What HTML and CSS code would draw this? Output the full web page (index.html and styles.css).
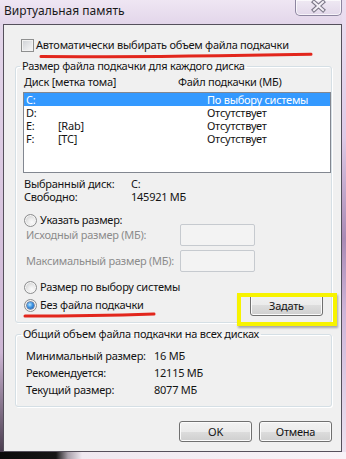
FILE: index.html
```html
<!DOCTYPE html>
<html lang="ru">
<head>
<meta charset="utf-8">
<title>Виртуальная память</title>
<link rel="stylesheet" href="styles.css">
</head>
<body>
<div class="screen">
  <div class="window">
    <div class="titlebar">
      <span class="title">Виртуальная память</span>
      <div class="close">
        <svg width="47" height="16" viewBox="0 0 47 16">
          <path d="M19 3 L28 11 M28 3 L19 11" stroke="#7c7888" stroke-width="4.2" stroke-linecap="square" fill="none"/>
          <path d="M19 3 L28 11 M28 3 L19 11" stroke="#f3eff6" stroke-width="2" stroke-linecap="square" fill="none"/>
        </svg>
      </div>
    </div>
    <div class="client">
      <div class="check-row"><span class="checkbox"></span><span>Автоматически выбирать объем файла подкачки</span></div>

      <fieldset class="group g1">
        <legend>Размер файла подкачки для каждого диска</legend>
        <div class="cols"><span class="c1">Диск [метка тома]</span><span>Файл подкачки (МБ)</span></div>
        <div class="listbox">
          <div class="lrow sel"><span class="d">C:</span><span class="l"></span><span>По выбору системы</span></div>
          <div class="lrow"><span class="d">D:</span><span class="l"></span><span>Отсутствует</span></div>
          <div class="lrow"><span class="d">E:</span><span class="l">[Rab]</span><span>Отсутствует</span></div>
          <div class="lrow"><span class="d">F:</span><span class="l">[TC]</span><span>Отсутствует</span></div>
        </div>
        <div class="info">
          <div class="irow"><span class="k">Выбранный диск:</span><span>C:</span></div>
          <div class="irow"><span class="k">Свободно:</span><span>145921 МБ</span></div>
        </div>
        <div class="radio-row first"><span class="radio"></span><span>Указать размер:</span></div>
        <div class="fields">
          <span class="flabel">Исходный размер (МБ):</span><span class="edit"></span>
          <span class="flabel">Максимальный размер (МБ):</span><span class="edit"></span>
        </div>
        <div class="bottom">
          <div class="radios">
            <div class="radio-row"><span class="radio"></span><span>Размер по выбору системы</span></div>
            <div class="radio-row"><span class="radio on"></span><span>Без файла подкачки</span></div>
          </div>
          <button class="btn set">Задать</button>
        </div>
      </fieldset>

      <fieldset class="group g2">
        <legend>Общий объем файла подкачки на всех дисках</legend>
        <div class="summary">
          <div class="srow"><span class="k">Минимальный размер:</span><span>16 МБ</span></div>
          <div class="srow"><span class="k">Рекомендуется:</span><span>12115 МБ</span></div>
          <div class="srow"><span class="k">Текущий размер:</span><span>8077 МБ</span></div>
        </div>
      </fieldset>

      <div class="actions">
        <button class="btn">OK</button>
        <button class="btn">Отмена</button>
      </div>

      <svg class="mark mark1" width="274" height="7" viewBox="0 0 274 7">
        <path d="M2 4.6 C 80 5, 200 3.6, 272 2.2" stroke="#e2261c" stroke-width="3" stroke-linecap="round" fill="none"/>
      </svg>
      <svg class="mark mark2" width="134" height="7" viewBox="0 0 134 7">
        <path d="M2 5 C 50 5, 100 4, 131 3" stroke="#e2261c" stroke-width="3" stroke-linecap="round" fill="none"/>
      </svg>
      <div class="highlight"></div>
    </div>
  </div>
  <div class="shadow"></div>
</div>
</body>
</html>
```

FILE: styles.css
```css
* { box-sizing: border-box; }
html, body { margin: 0; padding: 0; }
body {
  width: 346px;
  height: 459px;
  overflow: hidden;
  font-family: "Noto Sans", "Open Sans", sans-serif;
  font-size: 11px;
  letter-spacing: -0.25px;
  color: #141414;
  white-space: nowrap;
}
.screen {
  width: 346px;
  height: 459px;
  display: flex;
  flex-direction: column;
  background: linear-gradient(to bottom, #ecdff1 0%, #dfc9e6 30%, #a98ab5 52%, #cfb4d8 68%, #efe4f1 100%);
}
.window {
  width: 342px;
  height: 452px;
  display: flex;
  flex-direction: column;
  background: linear-gradient(to bottom, #efe6f3 0, #e3d6ea 24px, #dac8e0 40%, #cdb6d4 78%, #4a3d4f 100%);
}
.titlebar {
  height: 24px;
  display: flex;
  align-items: flex-start;
}
.title {
  padding: 3px 0 0 4px;
  font-size: 12px;
  line-height: 16px;
  letter-spacing: 0;
  color: #1a1a1a;
}
.close {
  margin-left: auto;
  width: 47px;
  height: 16px;
  border: 1px solid #8d86a0;
  border-top: none;
  border-radius: 0 0 5px 5px;
  background: linear-gradient(to bottom, #efe9f3, #e2d8ea);
  box-shadow: inset 0 0 0 1px rgba(255,255,255,0.7);
}
.close svg { display: block; margin: -1px 0 0 -1px; }

.client {
  position: relative;
  flex: 1;
  margin-left: 3px;
  width: 339px;
  border: 1px solid #55505c;
  background: #f0f0f0;
  display: flex;
  flex-direction: column;
}
.shadow {
  height: 7px;
  background: linear-gradient(to right, #0b0b0b 0, #161616 56px, #a9a1ab 68px, #efe8f0 82px, #f8f3f8 100%);
}

.check-row {
  display: flex;
  align-items: center;
  gap: 2px;
  height: 16px;
  line-height: 16px;
  margin: 12px 0 0 17px;
}
.checkbox {
  width: 13px;
  height: 13px;
  border: 1px solid #8e8f8f;
  background: linear-gradient(135deg, #cdd0d4 0%, #e6e7e9 55%, #f8f8f8 100%);
  box-shadow: inset 0 0 0 1px #f2f2f2;
}

.group {
  margin: 5px 9px 0 11px;
  padding: 0 0 9px 0;
  border: 1px solid #d5dfe5;
  border-radius: 3px;
  box-shadow: inset 1px 1px 0 #fff, 1px 1px 0 #fff;
  min-width: 0;
}
.group legend {
  margin-left: 4px;
  padding: 0 2px;
  line-height: 16px;
}
.g2 { margin-top: 3px; padding-bottom: 8px; }
.g2 legend { margin-left: 5px; }

.cols {
  display: flex;
  line-height: 16px;
  margin-left: 8px;
}
.cols .c1 { width: 154px; }

.listbox {
  margin: 2px 0 0 7px;
  width: 308px;
  height: 81px;
  border: 1px solid #828790;
  background: #fff;
}
.lrow {
  display: flex;
  height: 13px;
  line-height: 13px;
  padding-left: 2px;
}
.lrow .d { width: 32px; }
.lrow .l { width: 149px; }
.lrow.sel { background: #3399ff; color: #fff; }

.info { margin: 4px 0 0 8px; }
.irow { display: flex; line-height: 13px; }
.irow .k { width: 107px; }

.radio-row {
  display: flex;
  align-items: center;
  gap: 3px;
  height: 16px;
  line-height: 16px;
  margin-left: 8px;
}
.radio-row.first { margin-top: 9px; }
.radio {
  flex: none;
  width: 13px;
  height: 13px;
  border-radius: 50%;
  border: 1px solid #8c8d8e;
  background: radial-gradient(circle at 62% 66%, #fbfbfb 0, #ececec 35%, #cfcfcf 80%);
  box-shadow: inset 0 0 0 1px #f6f6f6;
}
.radio.on::after {
  content: "";
  display: block;
  width: 7px;
  height: 7px;
  margin: 2px;
  border-radius: 50%;
  background: radial-gradient(circle at 40% 38%, #b9e7ff 0, #3d94e4 45%, #104a9a 100%);
  box-shadow: 0 0 0 0.5px #1f3f73;
}

.fields {
  display: grid;
  grid-template-columns: 154px 75px;
  grid-auto-rows: 22px;
  row-gap: 4px;
  margin: -4px 0 0 10px;
}
.flabel {
  align-self: center;
  line-height: 16px;
  color: #8c8c8c;
}
.edit {
  height: 22px;
  border: 1px solid #c6cacf;
  border-radius: 2px;
  background: #f3f3f3;
}

.bottom {
  display: flex;
  align-items: flex-end;
  margin-top: 7px;
}
.radios { display: flex; flex-direction: column; gap: 2px; }

.btn {
  width: 73px;
  height: 21px;
  padding: 0;
  font-family: inherit;
  font-size: 11px;
  letter-spacing: inherit;
  color: #141414;
  border: 1px solid #707070;
  border-radius: 3px;
  background: linear-gradient(to bottom, #f2f2f2 0%, #ebebeb 50%, #dddddd 51%, #cfcfcf 100%);
  box-shadow: inset 0 0 0 1px #fbfbfb;
}
.btn.set {
  height: 22px;
  margin: 0 8px -3px auto;
}

.summary { margin-top: 5px; }
.srow { display: flex; line-height: 17px; margin-left: 10px; }
.srow .k { width: 128px; }

.actions {
  display: flex;
  justify-content: flex-end;
  gap: 7px;
  margin: 14px 9px 0 0;
}

.mark { position: absolute; display: block; }
.mark1 { left: 35px; top: 27px; }
.mark2 { left: 19px; top: 286px; }
.highlight {
  position: absolute;
  left: 233px;
  top: 268px;
  width: 100px;
  height: 33px;
  border: 4px solid #f7f300;
  box-shadow: 1px 2px 2px rgba(0,0,0,0.3);
}
```
